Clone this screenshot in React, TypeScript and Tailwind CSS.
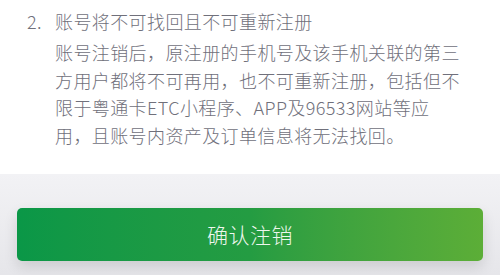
import React from 'react';

const App: React.FC = () => {
  // body copy, broken into the lines as shown
  const lines = [
    '账号注销后，原注册的手机号及该手机关联的第三',
    '方用户都将不可再用，也不可重新注册，包括但不',
    '限于粤通卡ETC小程序、APP及96533网站等应',
    '用，且账号内资产及订单信息将无法找回。',
  ];

  return (
    <div
      className="w-[500px] h-[275px] overflow-hidden flex flex-col bg-[#f1f1f4]"
      style={{ fontFamily: '"Noto Sans CJK SC", "Noto Sans", sans-serif' }}
    >
      <section className="h-[174px] bg-white pt-[7px] text-[#70707b] text-[18px] font-light tracking-[0.4px]">
        <div className="flex leading-[28px]">
          <span className="w-[55px] pl-[27px] shrink-0">2.</span>
          <span>账号将不可找回且不可重新注册</span>
        </div>
        <div className="pl-[55px] mt-[4px] leading-[27.6px]">
          {lines.map((line, i) => (
            <p key={i} className="whitespace-nowrap">{line}</p>
          ))}
        </div>
      </section>

      <div className="flex-1 px-[17px] pt-[34px] bg-gradient-to-b from-[#f2f2f5] to-[#e6e6ea]">
        <button className="w-full h-[53px] rounded-[5px] bg-gradient-to-r from-[#0a9747] via-[#249c42] to-[#5cae37] text-[#eef7ee] text-[21px] font-light tracking-[0.5px] shadow-[0_6px_14px_rgba(0,0,0,0.12)]">
          确认注销
        </button>
      </div>
    </div>
  );
};

export default App;
